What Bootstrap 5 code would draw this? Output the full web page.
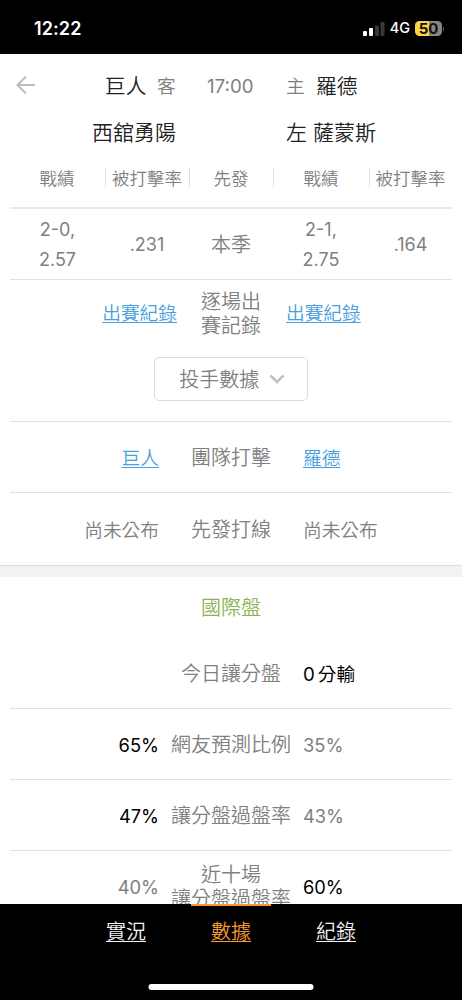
<!DOCTYPE html>
<html lang="zh-Hant">
<head>
<meta charset="utf-8">
<meta name="viewport" content="width=device-width, initial-scale=1">
<title>數據</title>
<link href="https://cdn.jsdelivr.net/npm/bootstrap@5.3.0/dist/css/bootstrap.min.css" rel="stylesheet">
<style>
body{font-family:Inter,"Noto Sans CJK TC",sans-serif;font-weight:350;color:#808080;font-size:18.7px;line-height:1.25}
.screen{width:462px;height:1000px}
.status{height:54px;color:#fff;padding:3px 17px 0 34px}
.clock{font-size:18px;font-weight:600;line-height:1;letter-spacing:.1px}
.net{font-size:14.5px;font-weight:500;line-height:1;margin:0 5px}
.batt{width:27px;height:15px;border-radius:4.5px;background:linear-gradient(90deg,#fbd343 50%,#868686 50%);color:#111;font-size:15px;font-weight:700;line-height:15px}
.rule-b{border-bottom:1px solid #e0e0e0}
.team{color:#222;font-size:20.7px;font-weight:350}
.teams,.pitchers{display:grid;white-space:nowrap;align-items:center}
.teams{grid-template-columns:105px 52px 50px 79px 30px 1fr;height:66px}
.teams svg{margin-top:-4px}
.pitchers{grid-template-columns:92px 194px 1fr;color:#222;font-size:21px;height:18px;margin-bottom:5px}
.five{display:grid;grid-template-columns:95px 84px 84px 96px 83px;align-items:center;text-align:center;margin:0 10px}
.heads{height:66px;font-size:17.5px;border-bottom:2px solid #e9e9e9}
.heads>div{height:19px;line-height:22px;border-left:1px solid #dedede;white-space:nowrap;margin-top:4px;text-indent:-1px}
.heads>div:first-child{border-left:0}
.season{height:71px;font-weight:400;line-height:30px;font-size:18px;padding-top:2px}
.season .term{font-size:20px;font-weight:350}
.three{display:grid;grid-template-columns:161px 120px 1fr;align-items:center;margin:0 10px;height:71.3px;padding-top:3px;white-space:nowrap}
.three>:first-child{text-align:right;padding-right:12px}
.three>:nth-child(2){text-align:center;font-size:20px}
.three>:last-child{padding-left:12px}
.two-line{line-height:24px}
.pct{font-size:18.3px;font-weight:400}
.strong-v{color:#000;font-weight:400}
.blue,.blue:hover{color:#4a9fe0;text-underline-offset:2px;text-decoration-thickness:1px}
.games{grid-template-columns:167px 108px 1fr;height:67px;padding-top:0}
.games>:last-child{padding-left:1px}
.games>:first-child{padding-right:0}
.picker-row{height:74px}
.picker{width:154px;height:44px;border:1px solid #dcdcdc;border-radius:5px;font-size:20px;font-weight:350;color:#808080;padding:2px 0 0 2px;margin-top:10px}
.picker svg{margin-top:-6px}
.gap-bar{height:12px;background:#f2f2f2;border-top:1px solid #dedede}
.green{color:#8bb356;font-size:20px;height:61px;padding-top:3px}
.last-row{height:69px;padding-top:3px}
.tabs{height:96px}
.tabs a{color:#f2f2f2;font-size:20px;width:80px;text-align:center;margin:0 12.5px;padding-top:14px;height:46px;border-top:2px solid transparent;text-underline-offset:2px;text-decoration-thickness:1px}
.tabs a.now{color:#f39a37;border-color:#f39a37}
.home{width:165px;height:6px;border-radius:3px;bottom:10px}
</style>
<script src="https://cdn.jsdelivr.net/npm/bootstrap@5.3.0/dist/js/bootstrap.bundle.min.js"></script>
</head>
<body class="bg-white">
<div class="screen d-flex flex-column overflow-hidden">
  <header class="status bg-black d-flex align-items-center flex-shrink-0">
    <span class="clock me-auto">12:22</span>
    <svg width="22" height="14" viewBox="0 0 22 14"><rect x="0" y="9" width="4" height="5" rx="1" fill="#fff"/><rect x="6" y="6" width="4" height="8" rx="1" fill="#fff"/><rect x="12" y="3.5" width="4" height="10.5" rx="1" fill="#383838"/><rect x="17.5" y="0" width="4" height="14" rx="1" fill="#383838"/></svg>
    <span class="net">4G</span>
    <span class="batt text-center">50</span>
    <svg width="3" height="6" viewBox="0 0 3 6"><path d="M1 .5Q3 3 1 5.500z" fill="#777"/></svg>
  </header>
  <main class="flex-grow-1 overflow-hidden">
    <div class="teams">
      <svg class="ms-3" width="20" height="20" viewBox="0 0 20 20" fill="none" stroke="#bdbdbd" stroke-width="2"><path d="M19 10H2M10 1.500 1.500 10l8.500 8.500"/></svg>
      <span class="team">巨人</span><span>客</span><span class="fw-normal">17:00</span><span>主</span><span class="team">羅德</span>
    </div>
    <div class="pitchers"><span></span><span>西舘勇陽</span><span>左 薩蒙斯</span></div>
    <div class="five heads"><div>戰績</div><div>被打擊率</div><div>先發</div><div>戰績</div><div>被打擊率</div></div>
    <div class="five season rule-b"><div>2-0,<br>2.57</div><div>.231</div><div class="term">本季</div><div>2-1,<br>2.75</div><div>.164</div></div>
    <div class="three games"><div><a class="blue" href="#">出賽紀錄</a></div><div class="two-line">逐場出<br>賽記錄</div><div><a class="blue" href="#">出賽紀錄</a></div></div>
    <div class="picker-row text-center">
      <button class="btn picker">投手數據 <svg class="ms-1" width="16" height="16" viewBox="0 0 16 16" fill="none" stroke="#bfbfbf" stroke-width="2.500"><path d="M1.500 4.500 8 11l6.500-6.500"/></svg></button>
    </div>
    <div class="three rule-b border-top" style="height:72.3px"><div><a class="blue" href="#">巨人</a></div><div>團隊打擊</div><div><a class="blue" href="#">羅德</a></div></div>
    <div class="three"><div>尚未公布</div><div>先發打線</div><div>尚未公布</div></div>
    <div class="gap-bar"></div>
    <div class="green d-flex align-items-center justify-content-center">國際盤</div>
    <div class="three rule-b"><div></div><div class="text-end" style="padding-right:10px">今日讓分盤</div><div class="strong-v"><span style="margin-right:3px">0</span>分輸</div></div>
    <div class="three rule-b"><div class="pct strong-v">65%</div><div>網友預測比例</div><div class="pct">35%</div></div>
    <div class="three rule-b"><div class="pct strong-v">47%</div><div>讓分盤過盤率</div><div class="pct">43%</div></div>
    <div class="three last-row"><div class="pct">40%</div><div class="two-line">近十場<br>讓分盤過盤率</div><div class="pct strong-v">60%</div></div>
  </main>
  <nav class="tabs bg-black d-flex justify-content-center position-relative flex-shrink-0">
    <a href="#">實況</a><a class="now" href="#">數據</a><a href="#">紀錄</a>
    <span class="home bg-white position-absolute start-50 translate-middle-x"></span>
  </nav>
</div>
</body>
</html>
